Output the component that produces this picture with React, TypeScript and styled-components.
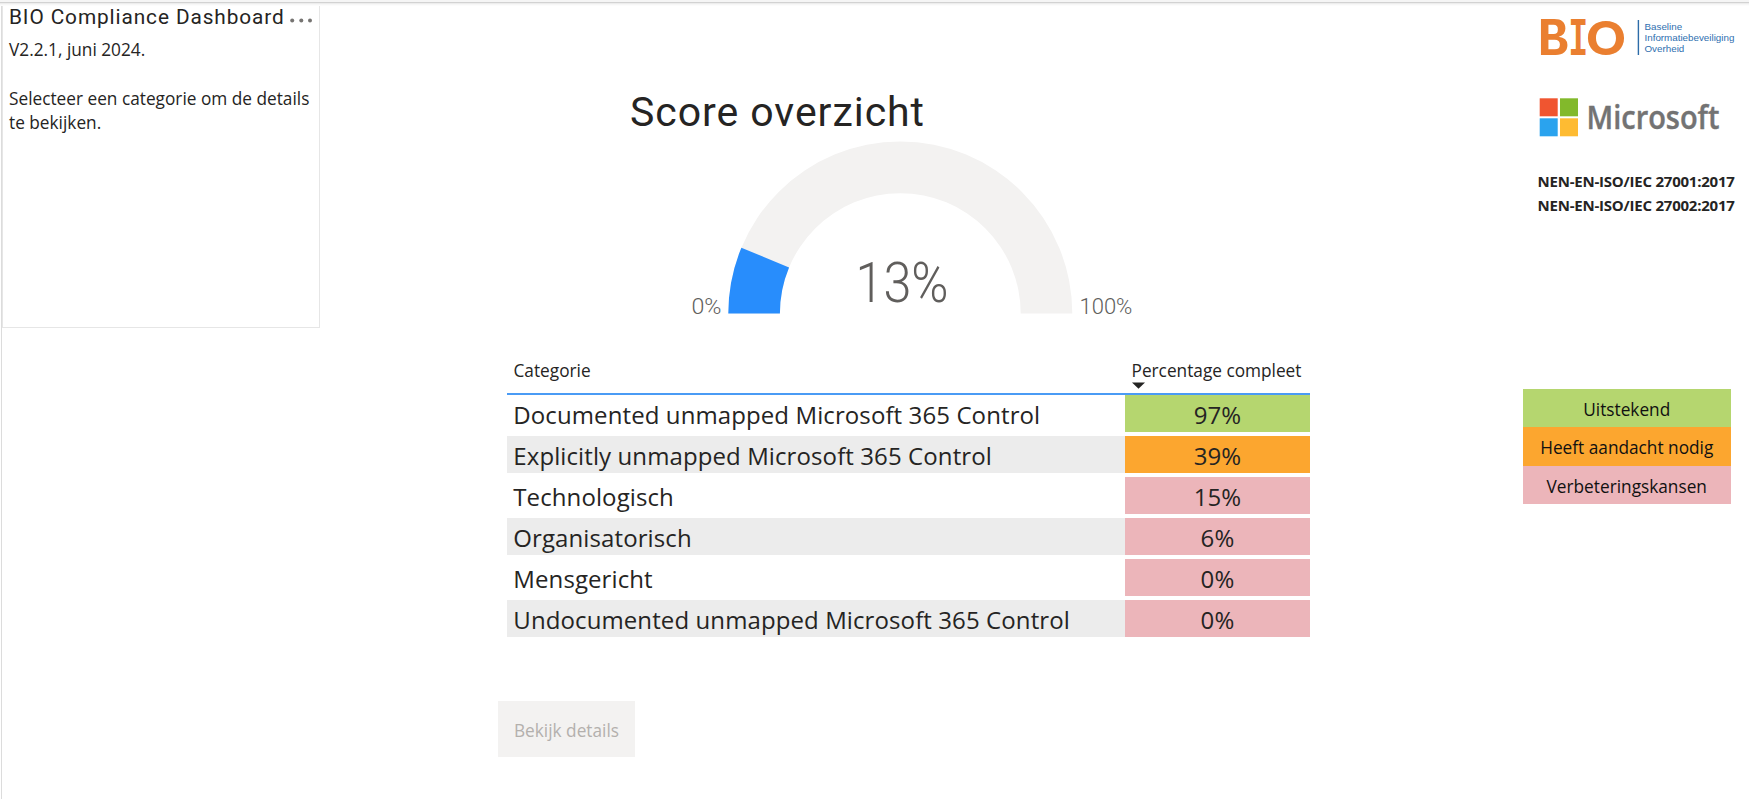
import React from "react";
import styled, { createGlobalStyle } from "styled-components";

const SANS = '"Open Sans", "Noto Sans", sans-serif';
const DIN = 'Roboto, "Liberation Sans", sans-serif';

const GlobalStyle = createGlobalStyle`
  *, *::before, *::after { box-sizing: border-box; }
  body { margin: 0; background: #fff; color: #252423; font-family: ${SANS}; overflow: hidden; }
`;

const Page = styled.div`
  height: 799px;
  display: flex;
  flex-direction: column;
`;

const TopStrip = styled.div`
  flex: none;
  height: 6px;
  background: linear-gradient(#f5f5f5 0 2px, #d2d2d2 2px 3px, #ededed 3px 4px, #f7f7f7 4px 5px, #fcfcfc 5px);
`;

const Canvas = styled.main`
  flex: 1;
  min-height: 0;
  display: flex;
  align-items: flex-start;
  margin-left: 1px;
  border-left: 1px solid #dcdcdc;
`;

const InfoPanel = styled.aside`
  width: 318px;
  height: 322px;
  padding-left: 6px;
  border: 1px solid #e6e6e6;
  border-top: 0;
`;

const InfoHeader = styled.div`
  display: flex;
  align-items: center;
  height: 28px;
  margin-top: -3px;
`;

const InfoTitle = styled.h1`
  margin: 0;
  width: 279px;
  font: 400 20.8px/28px ${DIN};
  letter-spacing: 0.9px;
  white-space: nowrap;
`;

const MoreDots = styled.svg`
  flex: none;
  width: 24px;
  height: 5px;
  margin-top: 7px;
  fill: #767472;
`;

const InfoText = styled.p`
  margin: 7px 0 0;
  font-size: 17.25px;
  line-height: 24.4px;
  white-space: pre-line;
`;

const Report = styled.section`
  width: 812px;
  margin-left: 178px;
  padding-top: 82px;
`;

const ReportTitle = styled.h2`
  margin: 0 0 0 132px;
  font: 400 41px/48px ${DIN};
  letter-spacing: 0.95px;
`;

const Gauge = styled.svg`
  display: block;
  width: 460px;
  height: 184px;
  margin-left: 182px;
  font-family: ${DIN};
  font-weight: 300;
  fill: #605e5c;
`;

const Table = styled.div`
  margin: 28px 0 0 9px;
  width: 803px;
`;

const TableHead = styled.div`
  display: grid;
  grid-template-columns: 618px 185px;
  height: 47px;
  padding-top: 11px;
  border-bottom: 2px solid #4a9bf5;
  font-size: 17.25px;
  line-height: 24px;
`;

const HeadCell = styled.div`
  padding-left: 6.5px;
  white-space: nowrap;
`;

const SortArrow = styled.svg`
  display: block;
  width: 13px;
  height: 7px;
  margin-top: -1px;
  fill: #252423;
`;

const TableBody = styled.div`
  display: grid;
  row-gap: 4px;
`;

const Row = styled.div`
  display: grid;
  grid-template-columns: 618px 185px;
  grid-template-rows: 37px;
  font-size: 24px;
  line-height: 40px;
  letter-spacing: 0.1px;

  &:nth-child(even) { background: #ececec; }
`;

const NameCell = styled.div`
  padding-left: 6.3px;
  white-space: nowrap;
`;

const ScoreCell = styled.div<{ $tone: string }>`
  text-align: center;
  background: ${(p) => p.$tone};
`;

const DetailsButton = styled.button`
  display: block;
  width: 137px;
  height: 56px;
  margin-top: 64px;
  padding: 4px 0 0;
  border: 0;
  background: #f3f2f1;
  color: #b3b0ad;
  font: 400 17.25px/24px ${SANS};
`;

const SideColumn = styled.aside`
  width: 226px;
  margin-left: 213px;
  padding-top: 10px;
`;

const Logo = styled.svg<{ $height: number }>`
  display: block;
  width: 226px;
  height: ${(p) => p.$height}px;
  overflow: visible;
`;

const Norms = styled.div`
  margin: 25px 0 0 14.5px;
  font-size: 15px;
  line-height: 24px;
  font-weight: 700;
  letter-spacing: -0.22px;
  white-space: nowrap;
`;

const Legend = styled.div`
  width: 207.5px;
  margin-top: 172px;
`;

const LegendItem = styled.div<{ $tone: string }>`
  height: 38.3px;
  padding-top: 2px;
  line-height: 38px;
  font-size: 17.25px;
  text-align: center;
  color: #111;
  background: ${(p) => p.$tone};
`;

const GREEN = "#b5d66f";
const ORANGE = "#fca62f";
const PINK = "#ecb5ba";

const rows = [
  { name: "Documented unmapped Microsoft 365 Control", score: "97%", tone: GREEN },
  { name: "Explicitly unmapped Microsoft 365 Control", score: "39%", tone: ORANGE },
  { name: "Technologisch", score: "15%", tone: PINK },
  { name: "Organisatorisch", score: "6%", tone: PINK },
  { name: "Mensgericht", score: "0%", tone: PINK },
  { name: "Undocumented unmapped Microsoft 365 Control", score: "0%", tone: PINK },
];

const legend = [
  { label: "Uitstekend", tone: GREEN },
  { label: "Heeft aandacht nodig", tone: ORANGE },
  { label: "Verbeteringskansen", tone: PINK },
];

const CX = 220.3;
const CY = 177.5;
const OUTER = 172;
const INNER = 120.4;

/* Ring segment between two fractions of the half circle, left to right. */
const segment = (from: number, to: number) => {
  const point = (f: number, r: number) =>
    `${CX - r * Math.cos(Math.PI * f)} ${CY - r * Math.sin(Math.PI * f)}`;
  return `M${point(from, OUTER)} A${OUTER} ${OUTER} 0 0 1 ${point(to, OUTER)} L${point(to, INNER)} A${INNER} ${INNER} 0 0 0 ${point(from, INNER)} Z`;
};

export default function App() {
  return (
    <>
      <GlobalStyle />
      <Page>
        <TopStrip />
        <Canvas>
          <InfoPanel>
            <InfoHeader>
              <InfoTitle>BIO Compliance Dashboard</InfoTitle>
              <MoreDots viewBox="0 0 24 5">
                <circle cx="4.2" cy="2.5" r="2" />
                <circle cx="13.3" cy="2.5" r="2" />
                <circle cx="22" cy="2.5" r="2" />
              </MoreDots>
            </InfoHeader>
            <InfoText>{"V2.2.1, juni 2024.\n\nSelecteer een categorie om de details te bekijken."}</InfoText>
          </InfoPanel>

          <Report>
            <ReportTitle>Score overzicht</ReportTitle>
            <Gauge viewBox="0 0 460 184">
              <path d={segment(0, 1)} fill="#f3f2f1" />
              <path d={segment(0, 0.125)} fill="#288dfc" />
              <text x="11.5" y="177.5" fontSize="22" textLength="30" lengthAdjust="spacingAndGlyphs">0%</text>
              <text x="399.5" y="177.5" fontSize="22">100%</text>
              <text x="175.5" y="166" fontSize="56" textLength="93" lengthAdjust="spacingAndGlyphs">13%</text>
            </Gauge>

            <Table>
              <TableHead>
                <HeadCell>Categorie</HeadCell>
                <HeadCell>
                  Percentage compleet
                  <SortArrow viewBox="0 0 13 7"><path d="M0 .5H13L6.5 6.8Z" /></SortArrow>
                </HeadCell>
              </TableHead>
              <TableBody>
                {rows.map((r) => (
                  <Row key={r.name}>
                    <NameCell>{r.name}</NameCell>
                    <ScoreCell $tone={r.tone}>{r.score}</ScoreCell>
                  </Row>
                ))}
              </TableBody>
            </Table>

            <DetailsButton disabled>Bekijk details</DetailsButton>
          </Report>

          <SideColumn>
            <Logo $height={48} viewBox="0 0 226 48">
              <g fill="#ea7f30" fontWeight="700">
                <text x="14.5" y="38.8" fontFamily="Liberation Mono" fontSize="53" textLength="31" lengthAdjust="spacingAndGlyphs">B</text>
                <text x="45.5" y="38.8" fontFamily="Liberation Mono" fontSize="53" textLength="19.5" lengthAdjust="spacingAndGlyphs">I</text>
                <text x="62.5" y="38.5" fontFamily="Inter" fontSize="47" textLength="41" lengthAdjust="spacingAndGlyphs">O</text>
              </g>
              <rect x="114.7" y="4" width="1.4" height="35" fill="#2d6ca8" />
              <g fill="#2f6fb0" fontFamily="Liberation Sans" fontSize="9.8">
                <text x="121.5" y="14">Baseline</text>
                <text x="121.5" y="25">Informatiebeveiliging</text>
                <text x="121.5" y="36">Overheid</text>
              </g>
            </Logo>
            <Logo $height={80} viewBox="0 0 226 80">
              <rect x="16.7" y="34.3" width="18" height="18" fill="#f05530" />
              <rect x="37" y="34.3" width="18" height="18" fill="#82b92b" />
              <rect x="16.7" y="54.3" width="18" height="18" fill="#2aa3ee" />
              <rect x="37" y="54.3" width="18" height="18" fill="#febb32" />
              <text x="63.5" y="65.3" fill="#737373" stroke="#737373" strokeWidth="0.4" fontFamily="Open Sans" fontWeight="600" fontSize="32" textLength="133" lengthAdjust="spacingAndGlyphs">Microsoft</text>
            </Logo>
            <Norms>
              <div>NEN-EN-ISO/IEC 27001:2017</div>
              <div>NEN-EN-ISO/IEC 27002:2017</div>
            </Norms>
            <Legend>
              {legend.map((l) => (
                <LegendItem key={l.label} $tone={l.tone}>{l.label}</LegendItem>
              ))}
            </Legend>
          </SideColumn>
        </Canvas>
      </Page>
    </>
  );
}
